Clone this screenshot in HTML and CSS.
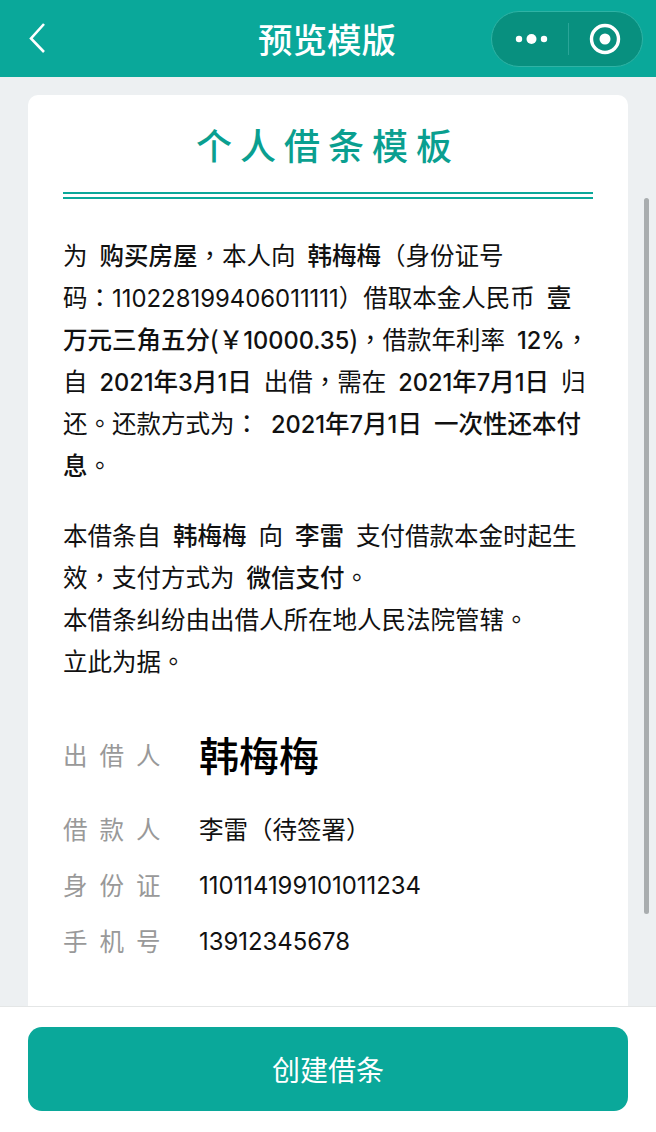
FILE: index.html
```html
<!DOCTYPE html>
<html lang="zh-CN">
<head>
<meta charset="utf-8">
<title>预览模版</title>
<link rel="stylesheet" href="styles.css">
</head>
<body>
<div class="app">
  <header class="nav">
    <svg class="back" width="18" height="32" viewBox="0 0 18 32"><polyline points="16,2 3,16.500 16,30" fill="none" stroke="#fff" stroke-width="2.600"/></svg>
    <h1 class="nav-title">预览模版</h1>
    <div class="capsule">
      <svg class="dots" width="36" height="14" viewBox="0 0 36 14"><circle cx="5" cy="7" r="3.200" fill="#fff"/><circle cx="17.500" cy="7" r="5" fill="#fff"/><circle cx="30" cy="7" r="3.200" fill="#fff"/></svg>
      <span class="capsule-sep"></span>
      <svg class="target" width="32" height="32" viewBox="0 0 32 32"><circle cx="16" cy="16" r="13.500" fill="none" stroke="#fff" stroke-width="3.400"/><circle cx="16" cy="16" r="5.500" fill="#fff"/></svg>
    </div>
  </header>
  <main class="main">
    <article class="card">
      <h2 class="title">个人借条模板</h2>
      <div class="rule"></div>
      <p class="para">为<b class="l">购买房屋</b><i lang="zh-TW">，</i>本人向<b class="l">韩梅梅</b>（身份证号<br>码<i lang="zh-TW">：</i><span class="num id">110228199406011111</span>）借取本金人民币<b class="l">壹</b><br><b>万元三角五分(￥<span class="num">10000.35</span>)</b><i lang="zh-TW">，</i>借款年利率<b class="l"><span class="num">12%</span></b><i lang="zh-TW">，</i><br>自<b class="l r"><span class="num">2021</span>年<span class="num">3</span>月<span class="num">1</span>日</b>出借<i lang="zh-TW">，</i>需在<b class="l r"><span class="num">2021</span>年<span class="num">7</span>月<span class="num">1</span>日</b>归<br>还<i lang="zh-TW">。</i>还款方式为<i lang="zh-TW">：</i><b class="l"><span class="num">2021</span>年<span class="num">7</span>月<span class="num">1</span>日</b><b class="l">一次性还本付</b><br><b>息</b><i lang="zh-TW">。</i></p>
      <p class="para second">本借条自<b class="l r">韩梅梅</b>向<b class="l r">李雷</b>支付借款本金时起生<br>效<i lang="zh-TW">，</i>支付方式为<b class="l">微信支付</b><i lang="zh-TW">。</i><br>本借条纠纷由出借人所在地人民法院管辖<i lang="zh-TW">。</i><br>立此为据<i lang="zh-TW">。</i></p>
      <dl class="info">
        <div class="row sign"><dt>出借人</dt><dd class="signature">韩梅梅</dd></div>
        <div class="row"><dt>借款人</dt><dd>李雷（待签署）</dd></div>
        <div class="row"><dt>身份证</dt><dd class="num id">110114199101011234</dd></div>
        <div class="row"><dt>手机号</dt><dd class="num id">13912345678</dd></div>
      </dl>
    </article>
    <div class="scrollbar"></div>
  </main>
  <footer class="foot">
    <button class="create">创建借条</button>
  </footer>
</div>
</body>
</html>
```
FILE: styles.css
```css
* { box-sizing: border-box; }
html, body { margin: 0; height: 100%; }
body {
  font-family: "Noto Sans CJK SC", "Noto Sans", sans-serif;
  color: #111;
  overflow: hidden;
}
.app { display: flex; flex-direction: column; height: 1132px; }
.nav {
  flex: none;
  height: 77px;
  background: #0aa89a;
  display: flex;
  align-items: center;
  position: relative;
  padding-left: 28px;
}
.back { display: block; margin-top: -1px; }
.nav-title {
  position: absolute;
  left: 0; right: 2px; top: 13px;
  margin: 0;
  text-align: center;
  font-size: 34.500px;
  line-height: 50px;
  font-weight: 500;
  color: #fff;
}
.capsule {
  position: absolute;
  left: 491px; top: 11px;
  width: 152px; height: 56px;
  border-radius: 28px;
  background: #08907f;
  border: 1px solid #2fb3a5;
  display: flex;
  align-items: center;
  padding-left: 22px;
}
.dots { flex: none; }
.capsule-sep { width: 1px; height: 32px; background: #2aa598; margin-left: 18px; }
.target { margin-left: 20px; flex: none; }
.main {
  flex: 1;
  min-height: 0;
  background: #edf0f2;
  padding: 18px 28px 0;
  overflow: hidden;
  position: relative;
}
.card {
  background: #fff;
  border-radius: 10px 10px 0 0;
  height: 100%;
  padding: 23px 35px 0;
}
.title {
  margin: 0;
  text-align: center;
  font-size: 36px;
  line-height: 52px;
  font-weight: 500;
  letter-spacing: 8px;
  color: #0a9f90;
}
.rule {
  height: 7px;
  margin-top: 22px;
  border-top: 2px solid #0aa89a;
  border-bottom: 2px solid #0aa89a;
}
.para { margin: 35px 0 0; font-size: 24.500px; line-height: 42px; white-space: nowrap; }
.second { margin-top: 28px; }
.para b { font-weight: 500; }
.para b.l { margin-left: 12px; }
.para b.r { margin-right: 12px; }
.para i {
  font-style: normal;
  font-family: "Noto Sans CJK TC", sans-serif;
  line-height: 1;
}
.num { font-family: Inter, "Noto Sans", sans-serif; font-size: 23.600px; line-height: 1; }
.num.id { font-size: 23.900px; }
.info { margin: 26px 0 0; }
.row { display: flex; align-items: center; height: 56px; }
.row.sign { height: 92px; }
dt { width: 136px; font-size: 24.500px; letter-spacing: 12px; color: #999; }
dd { margin: 0; font-size: 24.500px; color: #111; }
dd.num { padding-top: 4px; }
.signature { font-size: 40px; font-weight: 500; color: #000; }
.scrollbar {
  position: absolute;
  right: 7px; top: 121px;
  width: 5px; height: 716px;
  border-radius: 3px;
  background: #a9adaf;
}
.foot {
  flex: none;
  height: 126px;
  background: #fff;
  border-top: 1px solid #e4e6e6;
  padding: 20px 28px 0;
}
.create {
  display: block;
  width: 100%;
  height: 84px;
  border: 0;
  border-radius: 14px;
  background: #0aa89a;
  color: #fff;
  font-family: inherit;
  font-size: 28px;
}
```
